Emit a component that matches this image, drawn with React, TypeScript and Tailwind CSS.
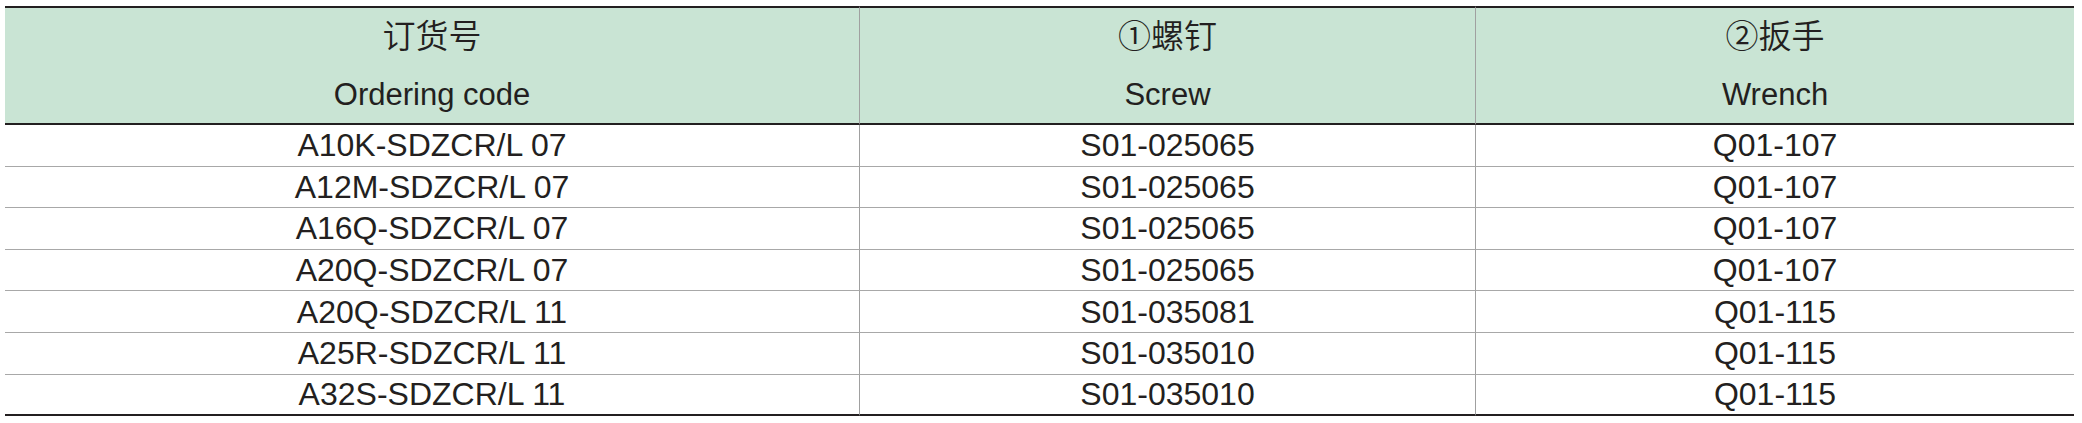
const headers = [
  { zh: '订货号', en: 'Ordering code' },
  { zh: '①螺钉', en: 'Screw' },
  { zh: '②扳手', en: 'Wrench' },
]

const rows = [
  ['A10K-SDZCR/L 07', 'S01-025065', 'Q01-107'],
  ['A12M-SDZCR/L 07', 'S01-025065', 'Q01-107'],
  ['A16Q-SDZCR/L 07', 'S01-025065', 'Q01-107'],
  ['A20Q-SDZCR/L 07', 'S01-025065', 'Q01-107'],
  ['A20Q-SDZCR/L 11', 'S01-035081', 'Q01-115'],
  ['A25R-SDZCR/L 11', 'S01-035010', 'Q01-115'],
  ['A32S-SDZCR/L 11', 'S01-035010', 'Q01-115'],
]

export default function App() {
  return (
    <div
      className="w-[2082px] h-[423px] bg-white pt-[6px] pl-[5px] text-[#231f20]"
      style={{ fontFamily: '"Liberation Sans", Arial, "Noto Sans CJK SC", sans-serif' }}
    >
      <div className="w-[2069px] grid grid-cols-[855px_616px_598px]">
        {/* Header */}
        {headers.map((h, i) => (
          <div
            key={h.en}
            className={`h-[119px] bg-[#c9e4d4] border-t-2 border-b-2 border-[#231f20] flex flex-col items-center ${
              i < 2 ? 'border-r border-r-[#a0a0a0]' : ''
            }`}
          >
            <div className="h-[56px] flex items-center text-[33px] font-[350] pt-[2px]" style={{ fontFamily: '"Liberation Sans", "Noto Sans CJK SC", sans-serif' }}>
              {h.zh}
            </div>
            <div className="h-[58px] flex items-center text-[31px] pt-[4px]">{h.en}</div>
          </div>
        ))}

        {/* Body */}
        {rows.map((r, ri) =>
          r.map((c, ci) => (
            <div
              key={`${ri}-${ci}`}
              className={`h-[41.6px] flex items-center justify-center text-[32px] leading-none ${
                ci < 2 ? 'border-r border-r-[#a0a0a0]' : ''
              } ${ri === rows.length - 1 ? 'border-b-2 border-b-[#231f20]' : 'border-b border-b-[#a8a8a8]'}`}
            >
              {c}
            </div>
          ))
        )}
      </div>
    </div>
  )
}
